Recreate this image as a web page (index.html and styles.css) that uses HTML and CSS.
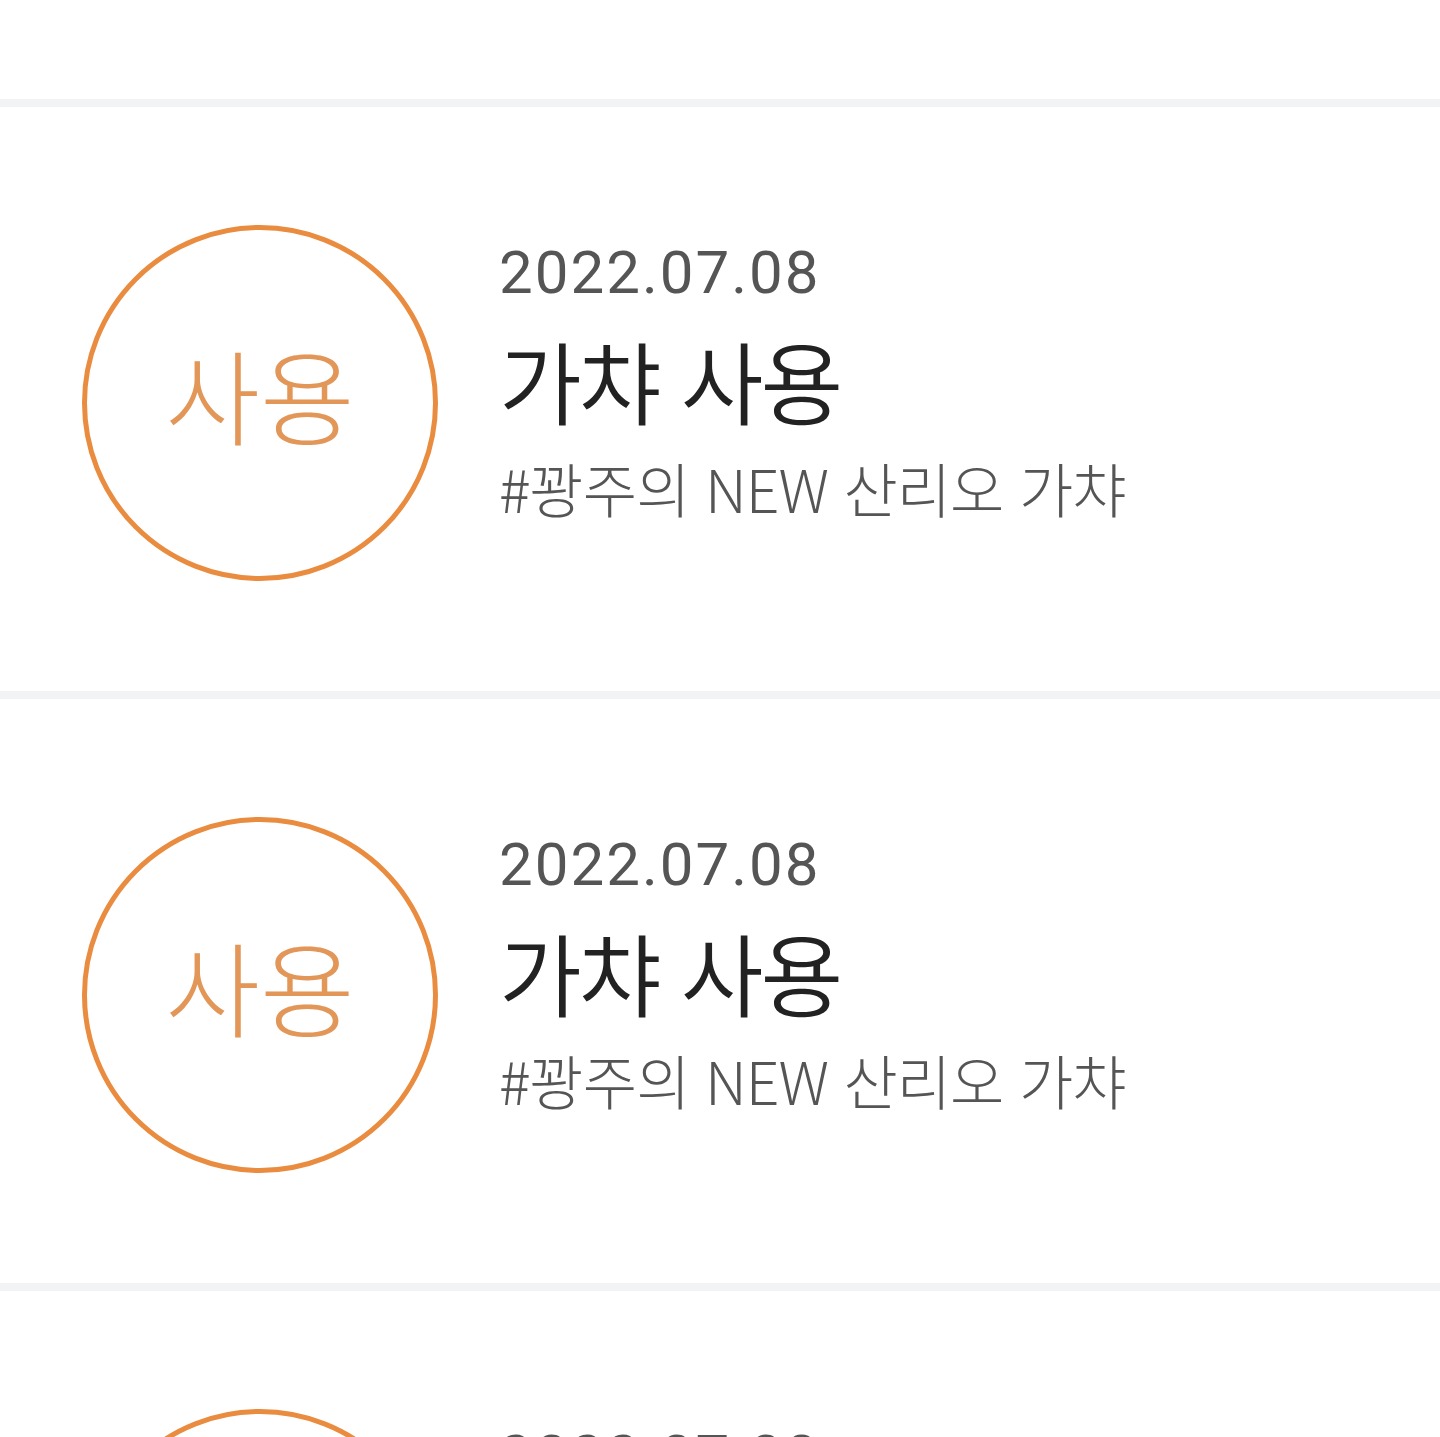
FILE: index.html
```html
<!DOCTYPE html>
<html lang="ko">
<head>
<meta charset="utf-8">
<link rel="stylesheet" href="styles.css">
<title>가챠 사용 내역</title>
</head>
<body>
<div class="list">
  <div class="spacer"></div>
  <div class="item">
    <div class="badge"><span>사용</span></div>
    <div class="info">
      <div class="date">2022.07.08</div>
      <div class="title">가챠 사용</div>
      <div class="desc">#꽝주의 NEW 산리오 가챠</div>
    </div>
  </div>
  <div class="item">
    <div class="badge"><span>사용</span></div>
    <div class="info">
      <div class="date">2022.07.08</div>
      <div class="title">가챠 사용</div>
      <div class="desc">#꽝주의 NEW 산리오 가챠</div>
    </div>
  </div>
  <div class="item">
    <div class="badge"><span>사용</span></div>
    <div class="info">
      <div class="date">2022.07.08</div>
      <div class="title">가챠 사용</div>
      <div class="desc">#꽝주의 NEW 산리오 가챠</div>
    </div>
  </div>
</div>
</body>
</html>
```
FILE: styles.css
```css
html, body {
  margin: 0;
  padding: 0;
  background: #ffffff;
  overflow: hidden;
}
body {
  font-family: "Noto Sans CJK KR", "Noto Sans", sans-serif;
}
.list {
  display: flex;
  flex-direction: column;
}
.spacer {
  height: 99px;
  border-bottom: 8px solid #f2f3f5;
  flex-shrink: 0;
}
.item {
  height: 584px;
  border-bottom: 8px solid #f2f3f5;
  display: flex;
  align-items: center;
  padding-left: 82px;
  gap: 61px;
  flex-shrink: 0;
}
.badge {
  width: 356px;
  height: 356px;
  box-sizing: border-box;
  border: 5px solid #ea8c3f;
  border-radius: 50%;
  display: flex;
  align-items: center;
  justify-content: center;
  flex-shrink: 0;
  margin-top: 8px;
}
.badge span {
  color: #e29658;
  font-size: 103px;
  font-weight: 200;
  line-height: 1;
  margin-bottom: 20px;
}
.info {
  display: flex;
  flex-direction: column;
  margin-bottom: 36px;
}
.date {
  font-family: Roboto, "Noto Sans CJK KR", sans-serif;
  color: #555555;
  font-size: 60px;
  line-height: 60px;
  letter-spacing: 2px;
  font-weight: 400;
}
.title {
  color: #222222;
  font-size: 90px;
  line-height: 152px;
  letter-spacing: -3px;
  font-weight: 350;
}
.desc {
  color: #555555;
  font-size: 59px;
  line-height: 65px;
  letter-spacing: -1px;
  font-weight: 300;
}
```
